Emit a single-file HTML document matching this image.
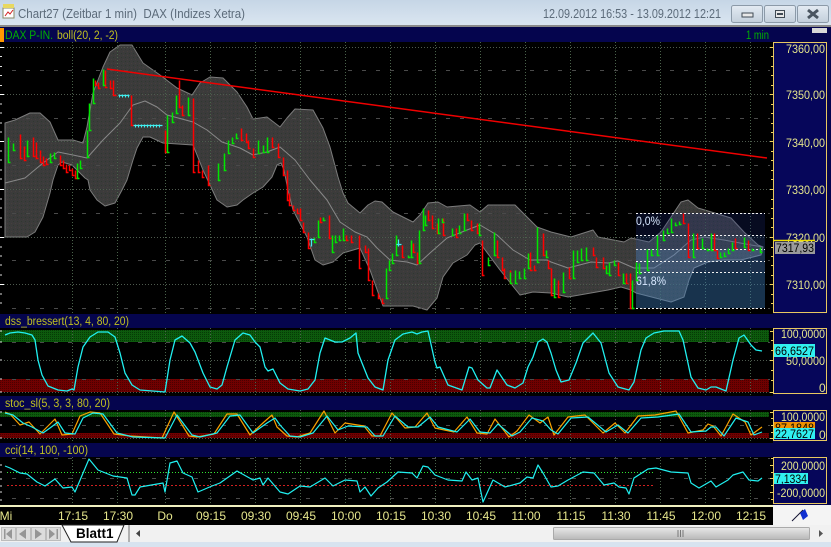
<!DOCTYPE html>
<html><head><meta charset="utf-8"><title>Chart27</title>
<style>
html,body{margin:0;padding:0;background:#000;width:831px;height:547px;overflow:hidden}
svg{display:block;font-family:"Liberation Sans",sans-serif}
text{lengthAdjust:spacingAndGlyphs}
.t{font-size:12px;fill:#e6e68c}
.x{font-size:12px;fill:#e6e68c;text-anchor:middle}
.h{font-size:11.5px;fill:#c0c020}
.v{font-size:12px;fill:#000}
</style></head><body>
<svg width="831" height="547" viewBox="0 0 831 547" xmlns="http://www.w3.org/2000/svg">
<defs>
<linearGradient id="tb" x1="0" y1="0" x2="0" y2="1"><stop offset="0" stop-color="#c6d6e6"/><stop offset="1" stop-color="#dbe6f1"/></linearGradient>
<linearGradient id="bt" x1="0" y1="0" x2="0" y2="1"><stop offset="0" stop-color="#e4ebf3"/><stop offset="1" stop-color="#c3cfdb"/></linearGradient>
<linearGradient id="sb" x1="0" y1="0" x2="0" y2="1"><stop offset="0" stop-color="#e8e8e8"/><stop offset="1" stop-color="#b8b8b8"/></linearGradient>
<pattern id="bd" width="4" height="4" patternUnits="userSpaceOnUse"><rect width="4" height="4" fill="#3b3b3b"/><rect x="1" y="1" width="1" height="1" fill="#2f382f"/><rect x="3" y="3" width="1" height="1" fill="#46403c"/></pattern>
<pattern id="gb" width="2" height="2" patternUnits="userSpaceOnUse"><rect width="2" height="2" fill="#0d5a0d"/><rect width="1" height="1" fill="#063a06"/></pattern>
<pattern id="rb" width="2" height="2" patternUnits="userSpaceOnUse"><rect width="2" height="2" fill="#700000"/><rect width="1" height="1" fill="#4a0000"/></pattern>
</defs>

<!-- title bar -->
<rect width="831" height="26" fill="url(#tb)"/>
<rect y="25" width="831" height="2" fill="#8a8a8a"/>
<rect x="3" y="8" width="11" height="10" fill="#fff" stroke="#8a8a6a"/>
<rect x="3" y="4" width="11" height="4" fill="#e8d860"/>
<path d="M5 16L8 12L10 14L13 10" fill="none" stroke="#d02020"/>
<text x="18" y="18" font-size="12.5" fill="#5c6b7a" textLength="227" lengthAdjust="spacingAndGlyphs">Chart27 (Zeitbar 1 min)&#160;&#160;DAX (Indizes Xetra)</text>
<text x="543" y="18" font-size="12.5" fill="#5c6b7a" textLength="178" lengthAdjust="spacingAndGlyphs">12.09.2012 16:53 - 13.09.2012 12:21</text>
<g stroke="#8c9aa8" fill="url(#bt)">
<rect x="731.5" y="5.5" width="31" height="17" rx="2"/>
<rect x="764.5" y="5.5" width="31" height="17" rx="2"/>
<rect x="797.5" y="5.5" width="31" height="17" rx="2"/>
</g>
<rect x="742" y="13" width="11" height="4" fill="#e8e8e8" stroke="#404a54"/>
<rect x="775.5" y="10.5" width="9" height="7" fill="#e8e8e8" stroke="#404a54"/>
<rect x="777" y="13" width="6" height="2" fill="#404a54"/>
<path d="M808 10L818 18M818 10L808 18" stroke="#4a5560" stroke-width="3"/>

<!-- panels -->
<rect y="27" width="831" height="480" fill="#05054e"/>
<rect y="42" width="773" height="272" fill="#000"/>
<rect y="328" width="773" height="68" fill="#000"/>
<rect y="410" width="773" height="33" fill="#000"/>
<rect y="457" width="773" height="48" fill="#000"/>
<rect x="0" y="28" width="4" height="14" fill="#ff9900"/>
<text x="5" y="39" font-size="11.5" fill="#00b000" textLength="48" lengthAdjust="spacingAndGlyphs">DAX P-IN.</text>
<text x="57" y="39" class="h" textLength="61" lengthAdjust="spacingAndGlyphs">boll(20, 2, -2)</text>
<text x="746" y="39" font-size="11.5" fill="#00b000" textLength="23" lengthAdjust="spacingAndGlyphs">1 min</text>
<rect x="812" y="28" width="15" height="5" fill="#d8d8d8"/>
<text x="5" y="325" class="h" textLength="124" lengthAdjust="spacingAndGlyphs">dss_bressert(13, 4, 80, 20)</text>
<text x="5" y="407" class="h" textLength="105" lengthAdjust="spacingAndGlyphs">stoc_sl(5, 3, 3, 80, 20)</text>
<text x="5" y="454" class="h" textLength="83" lengthAdjust="spacingAndGlyphs">cci(14, 100, -100)</text>

<rect x="0" y="330" width="769" height="12" fill="url(#gb)"/>
<rect x="0" y="379" width="769" height="13" fill="url(#rb)"/>
<rect x="0" y="412" width="769" height="5" fill="url(#gb)"/>
<rect x="0" y="433" width="769" height="5" fill="url(#rb)"/>

<!-- band -->
<path fill="url(#bd)" stroke="#7c7c7c" stroke-linejoin="round" d="M5 123L15 120L30 113L40 113L50 122L58 140L73 140L83 143L87 127L93 93L103 67L110 52L120 45L132 45L143 63L160 75L177 88L192 95L200 83L210 77L223 78L237 92L247 107L253 119L267 117L280 127L287 118L295 109L313 110L323 128L330 147L338 177L343 193L348 203L360 213L368 205L375 201L382 202L393 212L405 218L413 222L420 215L428 203L438 202L447 207L470 205L480 212L488 205L515 205L523 213L537 227L551 232L571 237L593 230L598 237L624 242L631 238L649 242L661 232L671 217L681 202L688 200L698 208L718 214L731 218L744 232L758 245L763 247L761 255L741 260L724 260L708 262L694 268L689 280L684 297L671 302L636 293L631 290L621 287L608 290L568 297L551 293L533 292L520 295L500 270L480 243L475 245L467 255L453 263L443 277L437 298L427 310L413 306L383 306L370 270L360 248L343 253L333 262L323 265L315 260L307 237L293 210L288 190L284 170L281 163L277 165L272 177L263 187L253 193L243 200L237 205L227 207L217 200L210 185L203 170L193 145L163 143L150 137L143 137L137 148L133 160L127 180L122 190L115 203L105 206L97 200L90 190L88 180L85 178L80 173L72 165L62 162L58 165L53 180L50 193L43 217L35 232L27 237L5 237Z"/>

<!-- grid -->
<g fill="none" stroke="#4a624a" stroke-dasharray="1 2" shape-rendering="crispEdges" transform="translate(.5 0)">
<path d="M72 42V314M117 42V314M165 42V314M210 42V314M255 42V314M300 42V314M345 42V314M390 42V314M435 42V314M480 42V314M525 42V314M570 42V314M615 42V314M660 42V314M705 42V314M750 42V314"/>
<path d="M72 328V396M117 328V396M165 328V396M210 328V396M255 328V396M300 328V396M345 328V396M390 328V396M435 328V396M480 328V396M525 328V396M570 328V396M615 328V396M660 328V396M705 328V396M750 328V396"/>
<path d="M72 410V443M117 410V443M165 410V443M210 410V443M255 410V443M300 410V443M345 410V443M390 410V443M435 410V443M480 410V443M525 410V443M570 410V443M615 410V443M660 410V443M705 410V443M750 410V443"/>
<path d="M72 457V505M117 457V505M165 457V505M210 457V505M255 457V505M300 457V505M345 457V505M390 457V505M435 457V505M480 457V505M525 457V505M570 457V505M615 457V505M660 457V505M705 457V505M750 457V505"/>
</g>
<g fill="none" stroke="#4e5a4e" stroke-dasharray="1 2" shape-rendering="crispEdges" transform="translate(0 .5)">
<path d="M4 47H770M4 94H770M4 141H770M4 189H770M4 237H770M4 284H770M4 360H770M4 392H770M4 438H770"/>
</g>
<g fill="none" stroke="#4a4a4a" stroke-dasharray="4 10" shape-rendering="crispEdges" transform="translate(0 .5)">
<path d="M12 70H770M12 118H770M12 165H770M12 213H770M12 260H770M12 308H770M12 342H770M12 379H770M12 425H770M12 458H770M12 478H770M12 498H770"/>
</g>
<path d="M7 472.5H654" stroke="#30e830" stroke-dasharray="1 2" shape-rendering="crispEdges"/>
<path d="M7 485.5H654" stroke="#d02020" stroke-dasharray="2 2" shape-rendering="crispEdges"/>
<!-- left ticks -->
<path d="M0 47.5H4M0 94.5H4M0 141.5H4M0 189.5H4M0 237.5H4M0 284.5H4" stroke="#fff"/>
<path d="M0 56.5H2M0 66.5H2M0 75.5H2M0 85.5H2M0 104H2M0 113H2M0 123H2M0 132H2M0 151H2M0 160H2M0 170H2M0 179H2M0 199H2M0 208H2M0 218H2M0 227H2M0 247H2M0 256H2M0 265H2M0 275H2M0 294H2M0 303H2" stroke="#ddd"/>
<path d="M0 331H2M0 342H2M0 360H2M0 379H2M0 392H2M0 412H2M0 425H2M0 438H2M0 465H2M0 472H2M0 479H2M0 486H2M0 492H2M0 500H2" stroke="#ddd"/>

<!-- middle -->
<path fill="none" stroke="#888" stroke-linejoin="round" d="M5 183L25 178L43 163L58 152L73 155L87 158L103 140L120 123L133 105L145 101L157 107L167 115L193 122L207 130L222 142L240 148L253 155L267 152L280 147L295 160L310 180L327 200L340 222L355 232L367 237L377 248L390 260L407 262L417 265L430 253L447 238L467 230L480 225L497 235L513 250L530 260L547 260L551 262L568 268L591 262L608 263L618 261L634 268L654 268L674 255L691 240L704 237L724 240L751 245L763 247"/>

<!-- trend -->
<path d="M107 69L767 158" stroke="#f00000" stroke-width="1.5" fill="none"/>

<!-- overlay -->
<rect x="636" y="213" width="129" height="22" fill="#1a2a80" fill-opacity=".25"/>
<rect x="636" y="235" width="129" height="14" fill="#2a4a90" fill-opacity=".32"/>
<rect x="636" y="249" width="129" height="23" fill="#4a82c8" fill-opacity=".38"/>
<rect x="636" y="272" width="129" height="36" fill="#3a7ab8" fill-opacity=".42"/>
<path d="M636 213.5H765M636 235.5H765M636 249.5H765M636 261.5H765M636 272.5H765M636 308.5H765" stroke="#f0f0f0" stroke-dasharray="2 2" shape-rendering="crispEdges"/>
<text x="636" y="225" font-size="12" fill="#d8e8ff" textLength="24" lengthAdjust="spacingAndGlyphs">0,0%</text>
<text x="636" y="285" font-size="12" fill="#d8e8ff" textLength="30" lengthAdjust="spacingAndGlyphs">61,8%</text>

<!-- bars -->
<g fill="none" stroke-width="1.5" transform="translate(.5 .5)">
<path stroke="#ff0000" d="M20 134V158h2M24 146V160h2M33 137V156h2M36 142V158h2M40 150V162h2M43 156V165h2M46 158V164h2M60 155V165h2M63 160V168h2M66 164V172h2M69 165V170h2M72 168V175h2M75 170V178h2M95 80V85h2M98 82V88h2M105 70V87h2M110 80V88h2M113 80V95h3M131 95V125h2M165 130V152h2M179 80V107h2M182 105V115h2M193 98V172h2M198 160V172h2M202 170V177h2M208 165V185h2M241 128V140h2M246 133V142h2M248 140V148h2M253 148V157h2M272 137V147h2M278 143V157h2M283 157V175h2M287 170V200h2M289 193V205h2M293 205V210h2M297 208V213h2M300 208V220h2M303 222V232h2M308 232V248h2M320 217V222h2M329 215V238h2M346 235V240h2M351 235V242h2M359 235V268h2M365 245V252h2M368 248V280h2M372 280V295h2M378 293V298h2M382 298V303h2M402 245V257h2M413 243V252h2M417 252V263h2M428 210V220h2M432 215V228h2M437 223V233h2M443 218V235h2M456 228V237h2M467 213V220h2M471 220V230h2M477 223V233h2M482 240V275h2M497 240V257h2M502 257V270h2M504 268V278h2M510 270V283h2M530 252V270h2M534 265V270h2M543 233V255h2M548 260V268h2M551 268V295h2M558 280V297h2M569 267V278h2M593 247V255h2M596 257V267h2M603 257V268h2M618 262V275h2M626 273V283h2M630 273V308h2M683 213V223h2M688 223V257h2M697 233V248h2M714 233V250h2M717 250V258h2M735 238V248h2M748 240V250h2"/>
<path stroke="#00e600" d="M8 137V162h2M13 143V150h2M27 140V156h2M50 153V162h2M54 152V158h2M77 163V178h2M80 160V168h2M87 130V157h2M89 103V130h2M93 78V103h2M103 69V85h2M167 115V152h2M172 112V122h2M176 95V113h2M188 97V115h2M218 163V180h2M224 153V170h2M228 140V153h2M232 137V143h2M236 133V138h2M258 140V153h2M263 145V152h2M267 137V152h2M314 237V242h2M318 220V237h2M323 217V220h2M332 235V252h2M335 235V242h2M339 235V240h2M343 228V240h2M386 268V298h2M389 260V270h2M392 253V263h2M396 235V255h2M408 255V257h2M411 240V257h2M419 230V263h2M423 208V230h2M425 215V225h2M438 218V233h2M442 218V222h2M452 228V235h2M459 225V233h2M464 213V230h2M479 223V235h2M488 257V265h2M494 232V255h2M510 272V283h2M515 270V283h2M519 271V278h2M524 268V278h2M528 253V268h2M537 227V262h2M546 250V257h2M554 278V297h2M563 272V292h2M573 250V278h2M577 250V262h2M581 248V260h2M586 247V260h2M606 265V273h2M609 262V275h2M614 260V265h2M623 273V283h2M632 280V308h2M636 262V280h2M639 263V273h2M647 249V270h2M651 249V255h2M657 235V255h2M663 230V240h2M667 228V233h2M671 218V232h2M675 222V225h2M679 221V224h2M693 233V257h2M702 238V248h2M707 248V250h2M711 233V250h2M720 252V257h2M724 252V256h2M728 248V253h2M732 242V250h2M744 237V247h2M752 248V250h2M760 247V252h2"/>
<path stroke="#40f0f0" stroke-width="1.2" d="M118 95H129M133 125H162M311 238V246M309 239h5M398 239V246M396 244h5"/>
<path stroke="#40f0f0" stroke-width="1" d="M119 94v3M122 94v3M125 94v3M128 94v3M135 124v3M138 124v3M141 124v3M144 124v3M147 124v3M150 124v3M153 124v3M156 124v3M159 124v3"/>
</g>

<!-- oscillators -->
<path fill="none" stroke="#20f0f0" stroke-width="1.3" stroke-linejoin="round" d="M5 335L10 333L18 332L25 333L32 335L35 340L38 360L42 375L48 386L58 390L67 391L72 389L74 390L78 367L83 347L90 337L98 332L108 332L115 337L120 353L125 373L132 385L140 390L165 392L170 360L175 340L182 336L190 343L195 352L203 373L210 387L217 389L222 385L227 367L235 340L243 333L250 335L255 342L260 347L265 367L268 371L273 369L280 383L288 389L300 391L308 389L315 380L320 353L325 338L335 342L342 342L350 338L356 333L358 353L368 378L375 387L383 390L388 360L395 340L403 334L412 332L417 334L422 332L428 331L435 362L437 368L440 367L448 385L462 390L469 367L472 368L478 380L487 388L490 388L497 370L507 385L515 388L523 383L528 367L533 357L538 342L543 339L547 342L551 353L556 370L561 382L569 380L576 363L583 343L593 333L601 343L609 373L618 387L629 390L634 382L641 350L646 338L654 333L664 331L679 331L683 340L691 377L698 388L706 390L711 387L716 387L726 391L733 360L739 338L744 335L751 345L756 350L762 351"/>
<path fill="none" stroke="#f8a000" stroke-width="1.2" stroke-linejoin="round" transform="translate(-3 -1)" d="M8 413L13 415L23 426L32 423L43 435L50 428L58 420L65 436L75 435L83 417L93 413L103 414L117 435L133 437L165 439L177 413L192 437L200 438L217 435L230 415L240 415L253 436L267 423L275 416L280 428L290 437L300 438L313 434L327 412L338 434L348 424L367 427L375 437L383 437L395 414L408 429L418 428L430 414L438 429L457 433L470 418L480 434L490 435L498 420L512 438L520 432L532 416L543 424L551 418L557 436L571 418L588 416L606 434L618 424L628 434L641 417L658 416L679 412L691 434L706 431L711 425L716 427L724 437L736 415L748 423L754 436L765 428"/>
<path fill="none" stroke="#20f0f0" stroke-width="1.2" stroke-linejoin="round" d="M5 413L13 415L23 423L32 427L43 433L50 428L58 422L65 433L75 434L83 418L93 413L103 414L117 433L133 437L165 438L177 415L192 435L200 437L217 433L230 416L240 415L253 433L267 423L275 418L280 425L290 436L300 437L313 433L327 416L338 430L348 426L367 427L375 436L383 436L395 416L408 427L418 427L430 417L438 427L457 432L470 419L480 432L490 433L498 424L512 436L520 432L532 418L543 421L551 430L558 434L571 418L588 417L606 432L618 425L628 433L641 418L658 417L679 414L691 432L706 431L711 427L716 427L724 436L736 418L748 422L754 435L762 432"/>
<path fill="none" stroke="#20f0f0" stroke-width="1.2" stroke-linejoin="round" d="M5 466L10 468L20 473L27 474L37 482L45 486L55 479L63 488L72 487L75 492L89 459L98 470L113 476L127 478L132 495L135 495L140 487L163 483L165 492L170 463L177 461L183 473L192 477L198 492L212 486L220 483L237 471L253 480L260 478L263 485L268 478L280 492L288 494L300 486L310 487L325 478L333 486L345 480L357 481L360 492L365 487L371 496L378 488L387 482L398 472L412 473L417 478L423 466L428 467L435 475L448 480L462 481L466 472L472 480L478 478L483 502L493 480L505 487L520 483L527 477L533 478L538 465L543 473L551 487L558 486L568 480L583 472L594 473L604 485L614 483L619 487L626 488L629 494L634 478L648 469L656 468L671 472L688 473L691 483L699 488L711 481L716 487L728 480L733 475L743 472L749 480L758 481L762 478"/>

<!-- axis panels -->
<g fill="#06065a" stroke="#e8c860" stroke-width="1" shape-rendering="crispEdges">
<rect x="773.5" y="42.5" width="53" height="270"/>
<rect x="773.5" y="328.5" width="53" height="65"/>
<rect x="773.5" y="410.5" width="53" height="30"/>
<rect x="773.5" y="457.5" width="53" height="46"/>
</g>
<g stroke="#f0d060" shape-rendering="crispEdges">
<path d="M770 47.5h3M770 94.5h3M770 141.5h3M770 189.5h3M770 237.5h3M770 284.5h3M770 331.5h3M770 360.5h3M770 392.5h3M770 412.5h3M770 438.5h3M770 465.5h3M770 478.5h3M770 492.5h3"/>
<path d="M771 56.5h2M771 66.5h2M771 75.5h2M771 85.5h2M771 104.5h2M771 113.5h2M771 123.5h2M771 132.5h2M771 151.5h2M771 160.5h2M771 170.5h2M771 179.5h2M771 199.5h2M771 208.5h2M771 218.5h2M771 227.5h2M771 247.5h2M771 256.5h2M771 265.5h2M771 275.5h2M771 294.5h2M771 303.5h2M771 340.5h2M771 350.5h2M771 370.5h2M771 380.5h2M771 418.5h2M771 425.5h2M771 432.5h2M771 458.5h2M771 472.5h2M771 485.5h2M771 499.5h2"/>
</g>
<text x="786" y="53" class="t" textLength="39" lengthAdjust="spacingAndGlyphs">7360,00</text>
<text x="786" y="99" class="t" textLength="39" lengthAdjust="spacingAndGlyphs">7350,00</text>
<text x="786" y="147" class="t" textLength="39" lengthAdjust="spacingAndGlyphs">7340,00</text>
<text x="786" y="194" class="t" textLength="39" lengthAdjust="spacingAndGlyphs">7330,00</text>
<text x="786" y="242" class="t" textLength="39" lengthAdjust="spacingAndGlyphs">7320,00</text>
<text x="786" y="289" class="t" textLength="39" lengthAdjust="spacingAndGlyphs">7310,00</text>
<text x="781" y="338" class="t" textLength="44" lengthAdjust="spacingAndGlyphs">100,0000</text>
<text x="786" y="365" class="t" textLength="39" lengthAdjust="spacingAndGlyphs">50,0000</text>
<text x="819" y="392" class="t">0</text>
<text x="781" y="421" class="t" textLength="44" lengthAdjust="spacingAndGlyphs">100,0000</text>
<text x="819" y="439" class="t">0</text>
<text x="781" y="470" class="t" textLength="44" lengthAdjust="spacingAndGlyphs">200,0000</text>
<text x="777" y="497" class="t" textLength="48" lengthAdjust="spacingAndGlyphs">-200,0000</text>
<path d="M773 240.5H815" stroke="#f0e000" stroke-width="1.5"/>
<rect x="775" y="242" width="40" height="12" fill="#9a9a9a"/>
<text x="776" y="252" class="v" textLength="38" lengthAdjust="spacingAndGlyphs">7317,93</text>
<rect x="774" y="344" width="41" height="13" fill="#30f0f0"/>
<text x="775" y="355" class="v" textLength="39" lengthAdjust="spacingAndGlyphs">66,6527</text>
<rect x="774" y="422" width="41" height="7" fill="#f09000"/>
<text x="775" y="432" class="v" textLength="39" lengthAdjust="spacingAndGlyphs">87,1848</text>
<rect x="774" y="428" width="41" height="11" fill="#30f0f0"/>
<text x="775" y="438" class="v" textLength="39" lengthAdjust="spacingAndGlyphs">22,7627</text>
<rect x="774" y="473" width="34" height="11" fill="#30f0f0"/>
<text x="775" y="483" class="v" textLength="32" lengthAdjust="spacingAndGlyphs">7,1334</text>

<!-- time axis -->
<rect y="505" width="773" height="2" fill="#f0f0c0"/>
<text x="6" y="520" class="x">Mi</text>
<text x="73" y="520" class="x">17:15</text>
<text x="118" y="520" class="x">17:30</text>
<text x="165" y="520" class="x">Do</text>
<text x="211" y="520" class="x">09:15</text>
<text x="256" y="520" class="x">09:30</text>
<text x="301" y="520" class="x">09:45</text>
<text x="346" y="520" class="x">10:00</text>
<text x="391" y="520" class="x">10:15</text>
<text x="436" y="520" class="x">10:30</text>
<text x="481" y="520" class="x">10:45</text>
<text x="526" y="520" class="x">11:00</text>
<text x="571" y="520" class="x">11:15</text>
<text x="616" y="520" class="x">11:30</text>
<text x="661" y="520" class="x">11:45</text>
<text x="706" y="520" class="x">12:00</text>
<text x="751" y="520" class="x">12:15</text>

<!-- corner -->
<rect x="773" y="505" width="58" height="20" fill="#f4f4f4"/>
<path d="M792 521L803 510" stroke="#101030"/>
<path d="M800 513L805 509L808 516L803 520Z" fill="#1030d0"/>

<!-- tab bar -->
<rect y="525" width="831" height="17" fill="#f1f1f1"/>
<rect y="542" width="831" height="5" fill="#d8e3ef"/>
<g fill="#dcdcdc" stroke="#bcbcbc" shape-rendering="crispEdges">
<rect x="1.5" y="527.5" width="14" height="13"/><rect x="16.5" y="527.5" width="14" height="13"/><rect x="31.5" y="527.5" width="14" height="13"/><rect x="46.5" y="527.5" width="14" height="13"/>
</g>
<g fill="#969696">
<path d="M12 529V539L6 534ZM4 529h1.5V539H4Z"/>
<path d="M26 529V539L19 534Z"/>
<path d="M35 529V539L42 534Z"/>
<path d="M49 529V539L55 534ZM56.500 529h1.500V539H56.500Z"/>
</g>
<path d="M62 525L71 542H117L124 525Z" fill="#fff" stroke="#222"/>
<text x="76" y="538" font-size="13.5" font-weight="bold" fill="#000">Blatt1</text>
<rect x="128" y="525" width="2" height="17" fill="#b0b0b0"/>
<path d="M140 530V537L136 533.500Z" fill="#444"/>
<rect x="553.500" y="527.500" width="256" height="12" rx="1" fill="url(#sb)" stroke="#aaa"/>
<path d="M678 530v7M680.500 530v7M683 530v7" stroke="#777"/>
<path d="M819 530V537L823 533.500Z" fill="#555"/>
</svg>
</body></html>
